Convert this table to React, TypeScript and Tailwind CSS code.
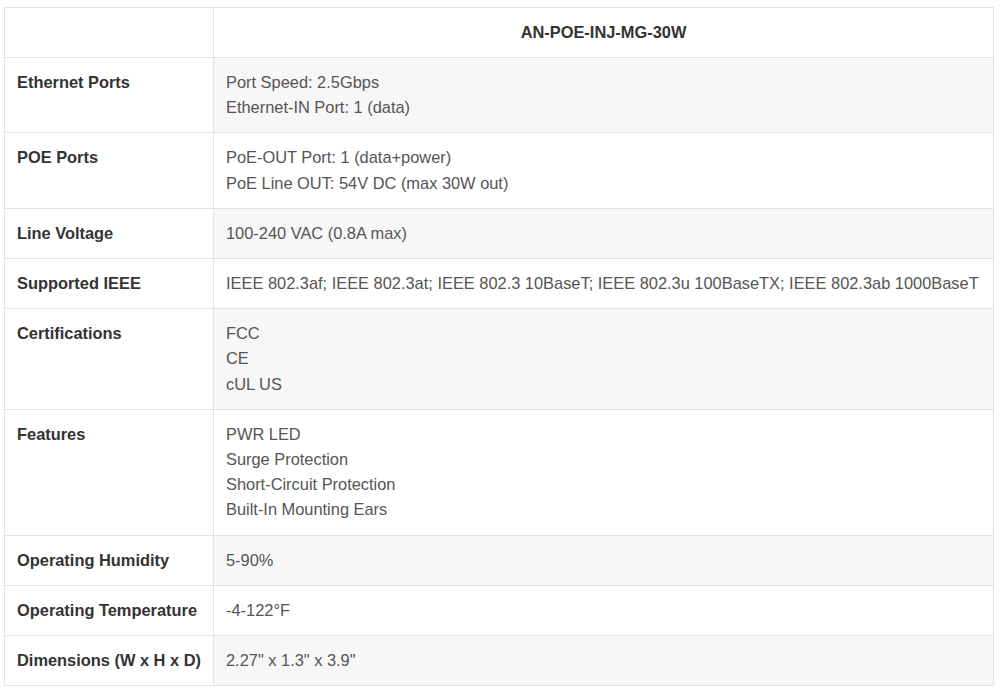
const rows: { label: string; lines: string[] }[] = [
  { label: "Ethernet Ports", lines: ["Port Speed: 2.5Gbps", "Ethernet-IN Port: 1 (data)"] },
  { label: "POE Ports", lines: ["PoE-OUT Port: 1 (data+power)", "PoE Line OUT: 54V DC (max 30W out)"] },
  { label: "Line Voltage", lines: ["100-240 VAC (0.8A max)"] },
  {
    label: "Supported IEEE",
    lines: ["IEEE 802.3af; IEEE 802.3at; IEEE 802.3 10BaseT; IEEE 802.3u 100BaseTX; IEEE 802.3ab 1000BaseT"],
  },
  { label: "Certifications", lines: ["FCC", "CE", "cUL US"] },
  {
    label: "Features",
    lines: ["PWR LED", "Surge Protection", "Short-Circuit Protection", "Built-In Mounting Ears"],
  },
  { label: "Operating Humidity", lines: ["5-90%"] },
  { label: "Operating Temperature", lines: ["-4-122°F"] },
  { label: "Dimensions (W x H x D)", lines: ['2.27" x 1.3" x 3.9"'] },
];

export default function App() {
  return (
    <div className="min-h-[694px] bg-white pl-1 pr-[6px] pt-[7px] font-['Liberation_Sans',Arial,sans-serif] text-[16.4px] leading-[25.2px]">
      <table className="w-full table-fixed border-collapse border border-[#e3e3e3]">
        <colgroup>
          <col className="w-[209px]" />
          <col />
        </colgroup>
        <thead>
          <tr className="h-[50px]">
            <th className="border border-[#e3e3e3] bg-white"></th>
            <th className="border border-[#e3e3e3] bg-white px-3 text-center font-bold text-[#333]">
              AN-POE-INJ-MG-30W
            </th>
          </tr>
        </thead>
        <tbody>
          {rows.map((r, i) => (
            <tr key={r.label}>
              <td className="border border-[#e3e3e3] bg-white px-3 py-3 align-top font-bold text-[#333]">
                {r.label}
              </td>
              <td
                className={
                  "border border-[#e3e3e3] px-3 py-3 align-top text-[#555] " +
                  (i % 2 === 0 ? "bg-[#f7f7f7]" : "bg-white")
                }
              >
                {r.lines.map((l) => (
                  <div key={l}>{l}</div>
                ))}
              </td>
            </tr>
          ))}
        </tbody>
      </table>
    </div>
  );
}
